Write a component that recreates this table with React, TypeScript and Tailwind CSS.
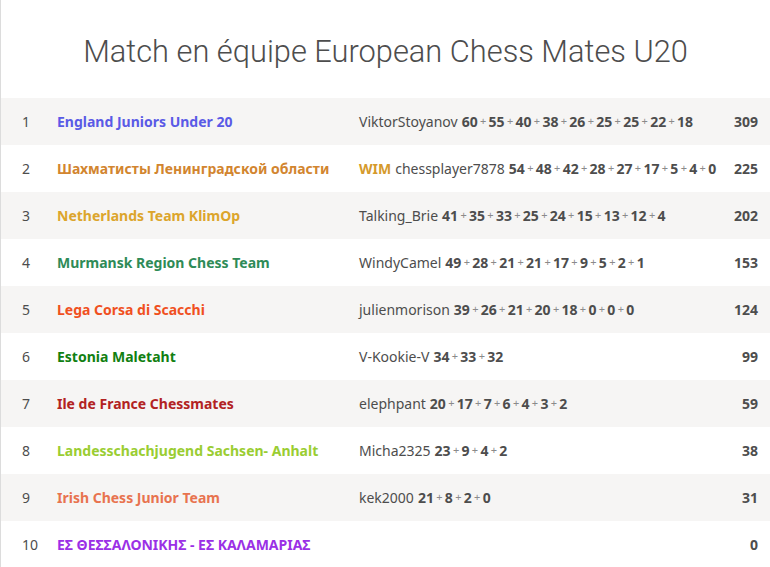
import React from "react";

type Row = {
  rank: number;
  team: string;
  color: string;
  title?: string;
  player?: string;
  scores: number[];
  total: number;
};

const rows: Row[] = [
  { rank: 1, team: "England Juniors Under 20", color: "text-[#5a5ae6]", player: "ViktorStoyanov", scores: [60, 55, 40, 38, 26, 25, 25, 22, 18], total: 309 },
  { rank: 2, team: "Шахматисты Ленинградской области", color: "text-[#d2852f]", title: "WIM", player: "chessplayer7878", scores: [54, 48, 42, 28, 27, 17, 5, 4, 0], total: 225 },
  { rank: 3, team: "Netherlands Team KlimOp", color: "text-[#dca52c]", player: "Talking_Brie", scores: [41, 35, 33, 25, 24, 15, 13, 12, 4], total: 202 },
  { rank: 4, team: "Murmansk Region Chess Team", color: "text-[#2e8b57]", player: "WindyCamel", scores: [49, 28, 21, 21, 17, 9, 5, 2, 1], total: 153 },
  { rank: 5, team: "Lega Corsa di Scacchi", color: "text-[#f0501e]", player: "julienmorison", scores: [39, 26, 21, 20, 18, 0, 0, 0], total: 124 },
  { rank: 6, team: "Estonia Maletaht", color: "text-[#118011]", player: "V-Kookie-V", scores: [34, 33, 32], total: 99 },
  { rank: 7, team: "Ile de France Chessmates", color: "text-[#b22222]", player: "elephpant", scores: [20, 17, 7, 6, 4, 3, 2], total: 59 },
  { rank: 8, team: "Landesschachjugend Sachsen- Anhalt", color: "text-[#9acd32]", player: "Micha2325", scores: [23, 9, 4, 2], total: 38 },
  { rank: 9, team: "Irish Chess Junior Team", color: "text-[#e8734f]", player: "kek2000", scores: [21, 8, 2, 0], total: 31 },
  { rank: 10, team: "ΕΣ ΘΕΣΣΑΛΟΝΙΚΗΣ - ΕΣ ΚΑΛΑΜΑΡΙΑΣ", color: "text-[#9b30e6]", scores: [], total: 0 },
];

export default function App() {
  return (
    <div
      className="w-[770px] h-[567px] overflow-hidden bg-white border-l border-[#dcdcdc] text-[#4d4d4d]"
      style={{ fontFamily: "'Noto Sans', sans-serif" }}
    >
      <div className="h-[98px] flex items-center justify-center pt-[6px]">
        <h1
          className="text-[30.8px] font-light text-[#4d4d4d] leading-none"
          style={{ fontFamily: "Roboto, 'Noto Sans', sans-serif" }}
        >
          Match en équipe European Chess Mates U20
        </h1>
      </div>
      <div className="flex flex-col">
        {rows.map((r, i) => (
          <div
            key={r.rank}
            className={`flex items-center h-[47px] text-[14px] ${i % 2 === 0 ? "bg-[#f6f5f4]" : "bg-white"}`}
          >
            <div className="w-[56px] pl-[21px] text-[#4d4d4d]">{r.rank}</div>
            <div className={`w-[302px] font-bold whitespace-nowrap ${r.color}`}>{r.team}</div>
            <div className="flex-1 flex items-center whitespace-nowrap">
              {r.title && <span className="font-bold text-[#d59a2c] mr-[4px]">{r.title}</span>}
              {r.player && <span className="mr-[4px]">{r.player}</span>}
              {r.scores.map((s, j) => (
                <React.Fragment key={j}>
                  {j > 0 && <span className="text-[11px] text-[#8a8a8a] mx-[2.3px]">+</span>}
                  <span className="font-bold">{s}</span>
                </React.Fragment>
              ))}
            </div>
            <div className="pr-[12px] font-bold text-right">{r.total}</div>
          </div>
        ))}
      </div>
    </div>
  );
}
